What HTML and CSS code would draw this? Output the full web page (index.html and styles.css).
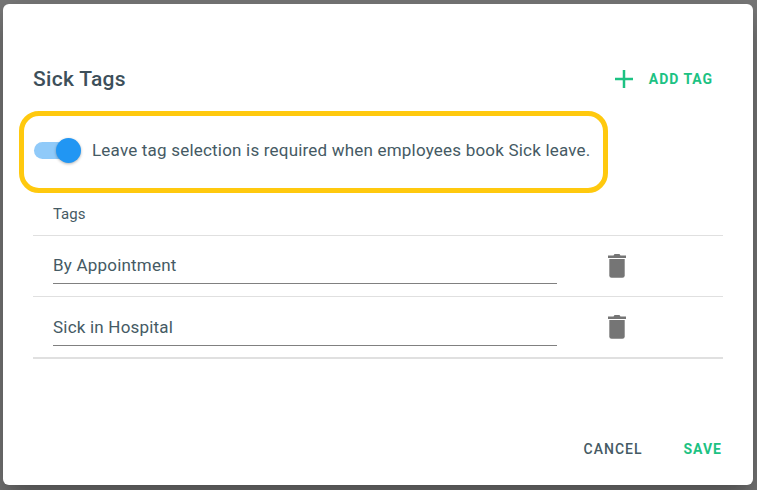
FILE: index.html
```html
<!DOCTYPE html>
<html lang="en">
<head>
  <meta charset="UTF-8" />
  <title>Sick Tags</title>
  <link rel="stylesheet" href="styles.css">
</head>
<body>
  <div class="dialog">
    <div class="header">
      <h2 class="title">Sick Tags</h2>
      <div class="add-tag">
        <svg class="plus" width="18" height="18" viewBox="0 0 18 18"><path d="M9 0v18M0 9h18" stroke="#1cc283" stroke-width="2.500" fill="none"/></svg>
        <span>ADD TAG</span>
      </div>
    </div>

    <div class="highlight">
      <div class="toggle"><div class="track"></div><div class="thumb"></div></div>
      <span class="toggle-label">Leave tag selection is required when employees book Sick leave.</span>
    </div>

    <div class="table">
      <div class="table-head">Tags</div>
      <div class="row">
        <div class="field">By Appointment</div>
        <svg class="trash" width="18" height="24" viewBox="0 0 18 24"><path d="M6.500 0h5l1 1.500H18v2.500H0V1.500h5.500z" fill="#757575"/><path d="M1.300 5h15.400v16.500a2.300 2.300 0 0 1-2.300 2.300H3.600a2.300 2.300 0 0 1-2.300-2.300z" fill="#757575"/></svg>
      </div>
      <div class="row last">
        <div class="field">Sick in Hospital</div>
        <svg class="trash" width="18" height="24" viewBox="0 0 18 24"><path d="M6.500 0h5l1 1.500H18v2.500H0V1.500h5.500z" fill="#757575"/><path d="M1.300 5h15.400v16.500a2.300 2.300 0 0 1-2.300 2.300H3.600a2.300 2.300 0 0 1-2.300-2.300z" fill="#757575"/></svg>
      </div>
    </div>

    <div class="actions">
      <span class="btn cancel">CANCEL</span>
      <span class="btn save">SAVE</span>
    </div>
  </div>
</body>
</html>
```

FILE: styles.css
```css
html, body {
  height: 100%;
}

body {
  margin: 0;
  background: #797979;
  font-family: Roboto, sans-serif;
  color: #455a64;
  overflow: hidden;
  padding: 4px 4px 0 3px;
  box-sizing: border-box;
}

.dialog {
  background: #fff;
  width: 750px;
  height: 481px;
  border-radius: 6px;
  padding: 0 30px;
  box-sizing: border-box;
  display: flex;
  flex-direction: column;
  box-shadow: 0 11px 15px -7px rgba(0,0,0,0.2), 0 24px 38px 3px rgba(0,0,0,0.14), 0 9px 46px 8px rgba(0,0,0,0.12);
}

.header {
  display: flex;
  justify-content: space-between;
  align-items: center;
  height: 107px;
  padding-top: 43px;
  box-sizing: border-box;
}

.title {
  margin: 0;
  font-size: 21px;
  font-weight: 500;
  color: #3d4f5a;
  letter-spacing: 0.3px;
}

.add-tag {
  display: flex;
  align-items: center;
  gap: 16px;
  margin-right: 10px;
  font-size: 14px;
  font-weight: 700;
  color: #1cc283;
  letter-spacing: 0.95px;
}

.highlight {
  display: flex;
  align-items: center;
  width: 589px;
  height: 82px;
  margin-left: -14px;
  padding: 0 0 3px 10px;
  border: 5px solid #ffc90e;
  border-radius: 20px;
  box-sizing: border-box;
}

.toggle {
  position: relative;
  width: 47px;
  height: 25px;
  flex: none;
  margin-right: 11px;
}

.track {
  position: absolute;
  top: 4px;
  left: 0;
  width: 40px;
  height: 17px;
  border-radius: 9px;
  background: #90caf9;
}

.thumb {
  position: absolute;
  top: 0;
  left: 22px;
  width: 25px;
  height: 25px;
  border-radius: 50%;
  background: #2196f3;
  box-shadow: 0 1px 3px rgba(0,0,0,0.3);
}

.toggle-label {
  margin-bottom: 2px;
  font-size: 17px;
  letter-spacing: 0.2px;
  white-space: nowrap;
}

.table-head {
  height: 43px;
  padding: 12px 0 0 20px;
  box-sizing: border-box;
  border-bottom: 1px solid #e0e0e0;
  font-size: 15px;
}

.row {
  display: flex;
  align-items: center;
  height: 61px;
  padding-left: 20px;
  box-sizing: border-box;
  border-bottom: 1px solid #e0e0e0;
}

.row.last {
  height: 62px;
  border-bottom-width: 2px;
}

.row.last .field {
  margin-top: 2px;
}

.field {
  width: 504px;
  height: 36px;
  padding-top: 4px;
  font-size: 17px;
  letter-spacing: 0.2px;
  line-height: 26px;
  border-bottom: 1px solid #808080;
  box-sizing: border-box;
}

.trash {
  margin-left: 51px;
}

.actions {
  display: flex;
  justify-content: flex-end;
  gap: 41px;
  margin-top: auto;
  padding: 0 1px 28px 0;
}

.btn {
  font-size: 14px;
  font-weight: 500;
  letter-spacing: 1px;
}

.save {
  color: #1cc283;
  font-weight: 700;
}
```
